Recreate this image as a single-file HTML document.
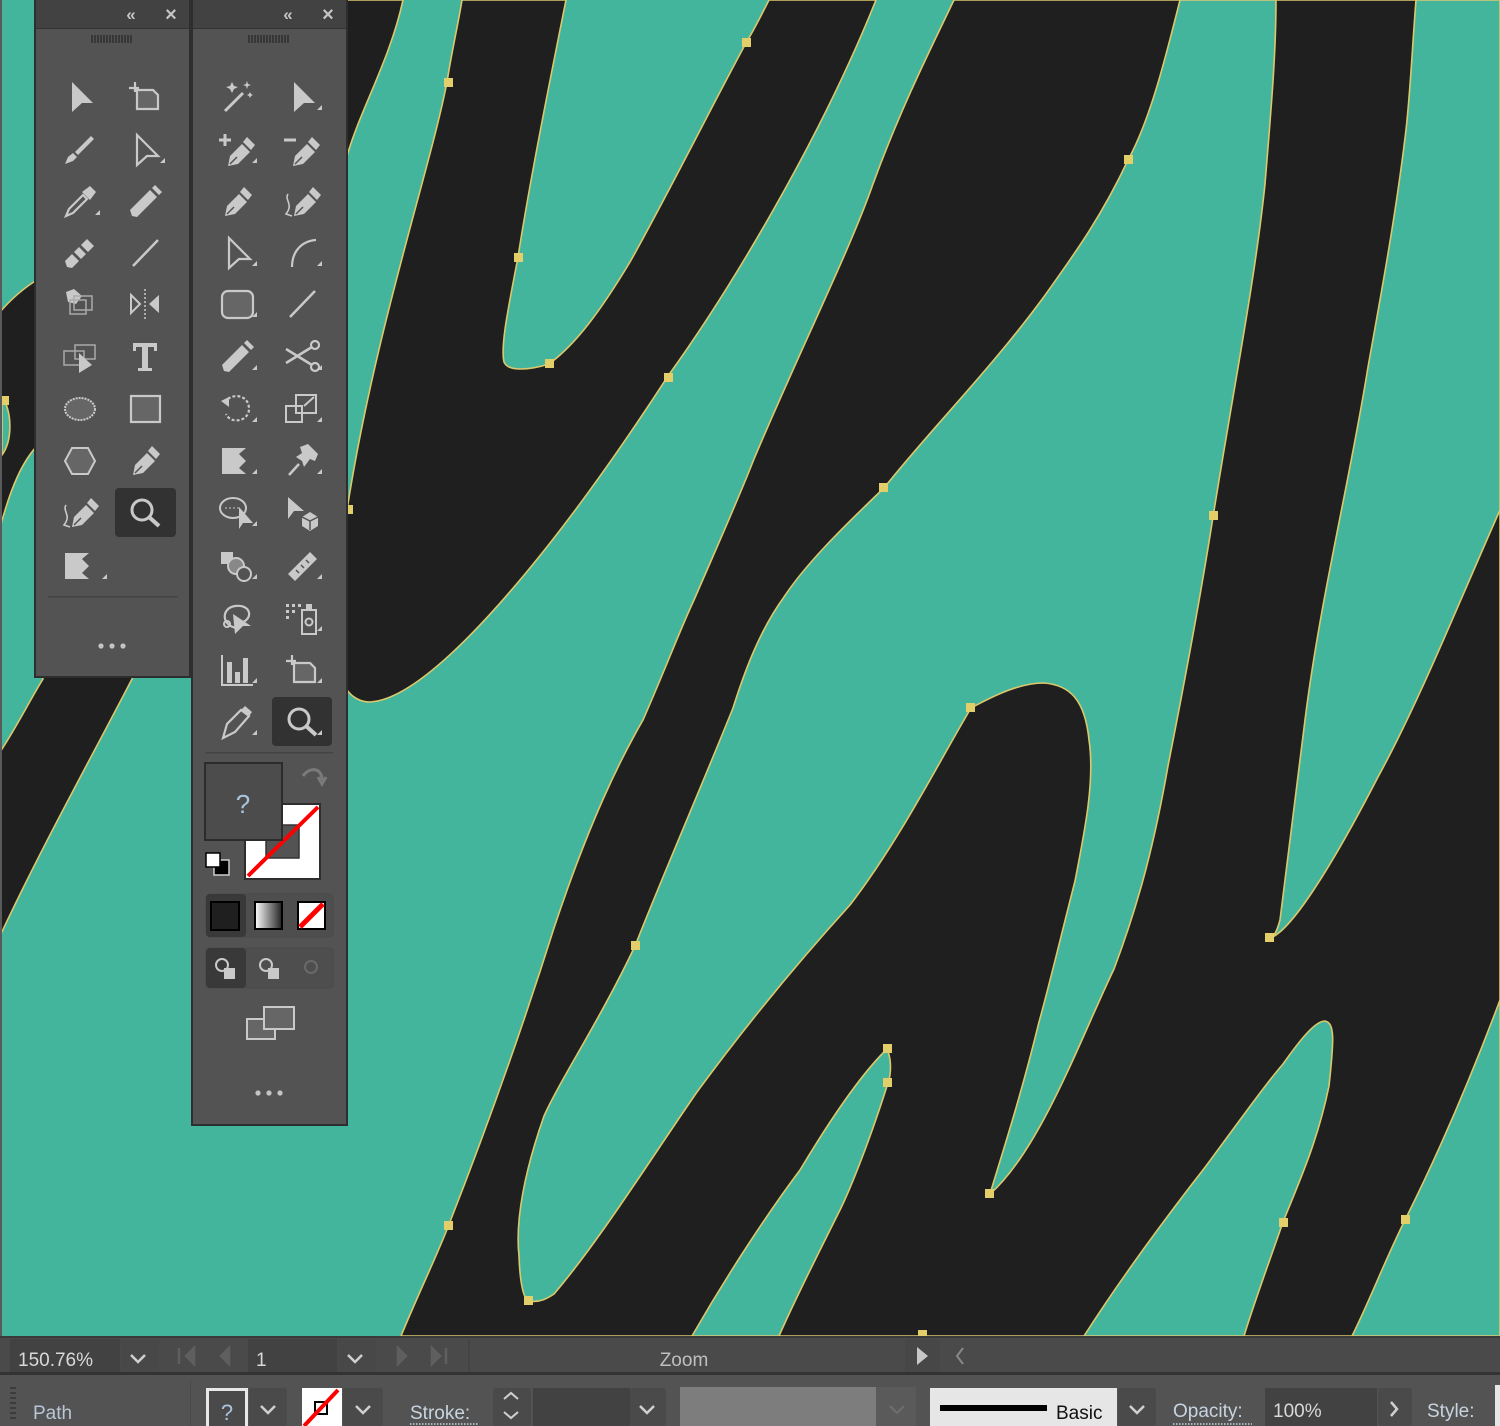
<!DOCTYPE html>
<html><head><meta charset="utf-8"><style>
html,body{margin:0;padding:0;background:#535353;}
svg{display:block;font-family:"Liberation Sans",sans-serif;}
</style></head><body>
<svg width="1500" height="1426" viewBox="0 0 1500 1426" xmlns="http://www.w3.org/2000/svg">
<defs>
<g id="tri"><path d="M35,33 L40,33 L40,28 Z" fill="#c9c9c9"/></g>
<g id="sel"><path d="M12,5 L33,26 L22,26 L12,35 Z" fill="#c9c9c9"/></g>
<g id="dsel"><path d="M12,5 L33,26 L22,26 L12,35 Z" fill="none" stroke="#c9c9c9" stroke-width="2.2" stroke-linejoin="miter"/></g>
<g id="artb"><path d="M4,11 H14 M10,5 V15" stroke="#c9c9c9" stroke-width="2.2"/><path d="M12,13 H28 L33,18 V32 H12 Z" fill="#666" stroke="#c9c9c9" stroke-width="2.2"/></g>
<g id="brush"><path d="M5,34 L8,27 L13,23 L17,27 L13,31 Z M15,22 L31,6 L34,9 L18,25 Z" fill="#c9c9c9"/></g>
<g id="eyed"><path d="M6,34 L9,27 L23,13 L27,17 L13,31 Z" fill="none" stroke="#c9c9c9" stroke-width="2.2"/><path d="M22,10 L30,4 L36,10 L30,18 Z" fill="#c9c9c9"/></g>
<g id="pencil"><path d="M7,34 L5,28 L25,8 L32,15 L12,35 Z M27,6 L30,3 L37,10 L34,13 Z" fill="#c9c9c9"/></g>
<g id="blob"><path d="M7,34 L5,28 L12,21 L19,28 L12,35 Z M14,19 L19,14 L26,21 L21,26 Z M21,12 L27,6 L34,13 L28,19 Z" fill="#c9c9c9"/></g>
<g id="line"><path d="M8,33 L33,7" stroke="#c9c9c9" stroke-width="2.5"/></g>
<g id="livep"><path d="M6,8 L14,5 L22,12 L16,20 L8,18 Z" fill="#c9c9c9"/><rect x="14" y="12" width="18" height="14" fill="none" stroke="#aaa" stroke-width="1.5"/><rect x="10" y="16" width="16" height="14" fill="none" stroke="#aaa" stroke-width="1.5"/></g>
<g id="reflect"><path d="M6,11 L15,20 L6,29 Z" fill="none" stroke="#c9c9c9" stroke-width="2"/><path d="M20,5 V35" stroke="#c9c9c9" stroke-width="1.5" stroke-dasharray="2,2"/><path d="M34,11 L24,20 L34,29 Z" fill="#c9c9c9"/></g>
<g id="persp"><rect x="4" y="14" width="20" height="14" fill="none" stroke="#aaa" stroke-width="1.5"/><rect x="15" y="8" width="20" height="14" fill="none" stroke="#aaa" stroke-width="1.5"/><path d="M19,16 L19,36 L32,28 Z" fill="#c9c9c9"/></g>
<g id="T"><path d="M8,6 H32 V14 H29 V10 H23 V31 H27 V34 H13 V31 H17 V10 H11 V14 H8 Z" fill="#c9c9c9"/></g>
<g id="ell"><ellipse cx="20" cy="20" rx="15" ry="11" fill="#666" stroke="#c9c9c9" stroke-width="2" stroke-dasharray="2,1"/></g>
<g id="rect"><rect x="6" y="7" width="29" height="26" fill="#666" stroke="#c9c9c9" stroke-width="2.2"/></g>
<g id="hex"><path d="M12,7 H28 L35,20 L28,33 H12 L5,20 Z" fill="#666" stroke="#c9c9c9" stroke-width="2"/></g>
<g id="pen"><path d="M8,34 L10,24 L22,12 L30,20 L18,32 Z M23,10 L27,5 L35,13 L31,18 Z" fill="#c9c9c9"/><path d="M10,32 L17,25" stroke="#535353" stroke-width="1.5"/></g>
<g id="cpen"><use href="#pen" transform="translate(4,0)"/><path d="M6,12 C2,18 12,22 4,32 L10,34" fill="none" stroke="#c9c9c9" stroke-width="1.6"/></g>
<g id="zoom"><circle cx="17" cy="17" r="10" fill="none" stroke="#c9c9c9" stroke-width="3"/><path d="M24,24 L34,33" stroke="#c9c9c9" stroke-width="4"/></g>
<g id="warp"><path d="M5,7 H29 L22,13 L29,20 L22,27 L29,33 H5 Z" fill="#c9c9c9"/></g>
<g id="wand"><path d="M8,34 L26,16" stroke="#c9c9c9" stroke-width="3"/><path d="M15,5 L17,9 L21,10 L17,12 L15,16 L13,12 L9,10 L13,9 Z M30,4 L31,7 L34,8 L31,9 L30,12 L29,9 L26,8 L29,7 Z M33,15 L34,17 L36,18 L34,19 L33,21 L32,19 L30,18 L32,17 Z" fill="#c9c9c9"/></g>
<g id="apen"><use href="#pen" transform="translate(3,2)"/><path d="M2,10 H14 M8,4 V16" stroke="#c9c9c9" stroke-width="3"/></g>
<g id="dpen"><use href="#pen" transform="translate(3,2)"/><path d="M2,10 H14" stroke="#c9c9c9" stroke-width="3"/></g>
<g id="arc"><path d="M10,34 C10,18 20,8 34,7" fill="none" stroke="#c9c9c9" stroke-width="2.2"/></g>
<g id="rrect"><rect x="5" y="7" width="31" height="27" rx="6" fill="#666" stroke="#c9c9c9" stroke-width="2.2"/></g>
<g id="scis"><circle cx="33" cy="8" r="4" fill="none" stroke="#c9c9c9" stroke-width="2.2"/><circle cx="33" cy="30" r="4" fill="none" stroke="#c9c9c9" stroke-width="2.2"/><path d="M4,12 L30,28 M4,26 L30,10" stroke="#c9c9c9" stroke-width="2.5"/></g>
<g id="rot"><path d="M8,14 C12,4 32,4 32,20 C32,32 14,36 9,25" fill="none" stroke="#c9c9c9" stroke-width="2.2" stroke-dasharray="3,2"/><path d="M4,12 L12,8 L12,18 Z" fill="#c9c9c9"/></g>
<g id="scale"><rect x="4" y="17" width="16" height="16" fill="none" stroke="#c9c9c9" stroke-width="2"/><rect x="14" y="6" width="20" height="18" fill="none" stroke="#c9c9c9" stroke-width="2"/><path d="M22,17 L32,8" stroke="#c9c9c9" stroke-width="2"/></g>
<g id="pin"><path d="M18,6 L26,3 L36,13 L33,20 L28,18 L22,26 L20,20 L14,16 L20,12 Z" fill="#c9c9c9"/><path d="M17,23 L7,34" stroke="#c9c9c9" stroke-width="2.5"/></g>
<g id="lsel"><ellipse cx="16" cy="15" rx="13" ry="10" fill="none" stroke="#c9c9c9" stroke-width="2"/><path d="M8,15 H22" stroke="#c9c9c9" stroke-dasharray="2,2"/><path d="M22,14 L36,30 L26,30 L22,36 Z" fill="#c9c9c9"/></g>
<g id="cube"><path d="M6,4 L22,18 L12,18 L6,26 Z" fill="#c9c9c9"/><path d="M20,24 L28,19 L36,24 L36,33 L28,38 L20,33 Z" fill="#c9c9c9"/><path d="M28,28 V37 M20,24 L28,28 L36,24" stroke="#535353" stroke-width="1.5" fill="none"/></g>
<g id="sbuild"><rect x="4" y="6" width="12" height="12" fill="#c9c9c9"/><circle cx="19" cy="20" r="8" fill="#888" stroke="#c9c9c9" stroke-width="2"/><circle cx="27" cy="28" r="7" fill="#535353" stroke="#c9c9c9" stroke-width="2"/></g>
<g id="ruler"><path d="M6,28 L28,6 L35,13 L13,35 Z" fill="#c9c9c9"/><path d="M14,24 L17,27 M19,19 L22,22 M24,14 L27,17" stroke="#535353" stroke-width="1.5"/></g>
<g id="lasso"><path d="M20,30 C4,28 4,10 18,8 C34,6 36,20 26,24" fill="none" stroke="#c9c9c9" stroke-width="2.2"/><circle cx="10" cy="26" r="3" fill="none" stroke="#c9c9c9" stroke-width="2"/><path d="M16,16 L34,28 L26,28 L18,36 Z" fill="#c9c9c9"/></g>
<g id="spray"><path d="M4,6 h3v3h-3z M10,6 h3v3h-3z M16,6 h3v3h-3z M4,12 h3v3h-3z M10,12 h3v3h-3z M4,18 h3v3h-3z" fill="#c9c9c9"/><rect x="20" y="12" width="14" height="24" fill="none" stroke="#c9c9c9" stroke-width="2"/><rect x="24" y="6" width="6" height="6" fill="#c9c9c9"/><circle cx="27" cy="24" r="3.5" fill="none" stroke="#c9c9c9" stroke-width="2"/></g>
<g id="graph"><path d="M5,5 V35 H36" fill="none" stroke="#c9c9c9" stroke-width="2"/><rect x="10" y="12" width="5" height="21" fill="#c9c9c9"/><rect x="18" y="22" width="5" height="11" fill="#c9c9c9"/><rect x="26" y="8" width="5" height="25" fill="#c9c9c9"/></g>
<g id="knife"><path d="M6,36 L10,22 L24,8 L32,14 L18,30 Z" fill="none" stroke="#c9c9c9" stroke-width="2.2"/><path d="M24,8 L28,4 L35,10 L32,14 Z" fill="#c9c9c9"/></g>
</defs>

<!-- canvas -->
<rect x="0" y="0" width="1500" height="1336" fill="#43b59d"/>
<g stroke="#dcc86c" stroke-width="1.6" stroke-linejoin="round">
<path fill="#1f1f1f" d="M954,0 L1500,0 L1500,1336 L401,1336 C420,1290 435,1260 448,1227 C490,1120 525,1020 554,928 C590,820 620,760 643,720 C665,670 680,630 694,600 C720,540 738,500 754,459 C800,350 850,250 873,184 C900,110 930,50 954,0 Z"/>
<path fill="#43b59d" d="M1180,0 C1165,60 1150,120 1128,160 C1100,220 1070,260 1043,298 C990,370 930,430 884,488 C840,530 805,565 784,597 C760,630 745,670 733,708 C700,790 665,870 635,946 C600,1020 560,1080 544,1116 C525,1170 515,1220 519,1256 C520,1285 524,1300 529,1301 C540,1303 548,1298 554,1294 C600,1240 650,1160 697,1092 C750,1020 800,960 850,905 C900,840 940,760 971,708 C995,695 1020,683 1044,683 C1070,685 1085,700 1089,740 C1095,780 1085,830 1075,881 C1060,940 1048,990 1039,1022 C1020,1100 1000,1160 990,1194 C1040,1150 1080,1040 1114,969 C1140,900 1155,840 1168,766 C1185,680 1200,600 1213,517 C1235,380 1255,280 1265,184 C1272,100 1276,50 1276,0 Z"/>
<path fill="#43b59d" d="M1416,0 C1412,50 1410,100 1405,138 C1395,220 1380,300 1368,367 C1350,480 1320,600 1305,720 C1295,800 1285,880 1280,920 C1276,935 1272,938 1270,938 C1290,932 1330,870 1378,777 C1420,700 1460,600 1500,510 L1500,0 Z"/>
<path fill="#43b59d" d="M1084,1336 C1120,1280 1160,1225 1206,1166 C1240,1120 1265,1085 1283,1064 C1300,1040 1315,1021 1325,1021 C1335,1023 1334,1040 1329,1086 C1318,1140 1300,1180 1283,1222 C1270,1260 1255,1300 1244,1336 Z"/>
<path fill="#43b59d" d="M1352,1336 C1370,1300 1385,1260 1405,1220 C1440,1150 1470,1080 1500,1000 L1500,1336 Z"/>
<path fill="#43b59d" d="M692,1336 C730,1270 770,1210 800,1170 C830,1120 860,1075 887,1049 C892,1060 891,1075 888,1083 C870,1140 850,1190 840,1210 C815,1260 795,1300 779,1336 Z"/>
<path fill="#1f1f1f" d="M462,0 L566,0 C550,80 530,180 518,257 C510,300 500,345 504,362 C508,372 530,370 549,364 C575,345 600,312 630,262 C665,200 715,100 746,43 C755,28 762,14 769,0 L876,0 C820,140 730,290 668,376 C620,450 570,520 525,574 C470,640 410,700 370,702 C360,702 352,697 347,690 L320,690 L320,515 L347,510 C375,330 430,170 447,82 C452,50 458,25 462,0 Z"/>
<path fill="#1f1f1f" d="M320,0 L403,0 C390,60 360,110 347,156 L320,170 Z"/>
<path fill="#1f1f1f" d="M0,312 C12,298 25,287 40,278 L40,443 C22,460 10,490 0,528 Z"/>
<path fill="#43b59d" d="M2,397 C12,410 13,440 2,455 Z"/>
<path fill="#1f1f1f" d="M0,752 C15,730 30,700 43,679 L43,650 L145,650 L132,679 C90,760 40,850 0,936 Z"/>
</g>
<g fill="#e2cf6a">
<rect x="444" y="78" width="9" height="9"/><rect x="742" y="38" width="9" height="9"/><rect x="514" y="253" width="9" height="9"/>
<rect x="545" y="359" width="9" height="9"/><rect x="664" y="373" width="9" height="9"/><rect x="879" y="483" width="9" height="9"/>
<rect x="1124" y="155" width="9" height="9"/><rect x="1209" y="511" width="9" height="9"/><rect x="1265" y="933" width="9" height="9"/>
<rect x="966" y="703" width="9" height="9"/><rect x="631" y="941" width="9" height="9"/><rect x="883" y="1044" width="9" height="9"/>
<rect x="883" y="1078" width="9" height="9"/><rect x="985" y="1189" width="9" height="9"/><rect x="444" y="1221" width="9" height="9"/>
<rect x="524" y="1296" width="9" height="9"/><rect x="1279" y="1218" width="9" height="9"/><rect x="1401" y="1215" width="9" height="9"/>
<rect x="918" y="1330" width="9" height="6"/><rect x="1" y="396" width="8" height="9"/><rect x="347" y="505" width="6" height="9"/>
</g>
<rect x="0" y="0" width="2" height="1336" fill="#5a5a5a"/>

<!-- panel 1 -->
<rect x="34" y="0" width="157" height="678" fill="#2e2e2e"/>
<rect x="36" y="0" width="153" height="676" fill="#535353"/>
<rect x="36" y="0" width="153" height="28" fill="#424242"/>
<rect x="36" y="28" width="153" height="1" fill="#333"/>
<text x="131" y="20" fill="#c4c4c4" font-size="17" font-weight="bold" text-anchor="middle">«</text>
<text x="171" y="21" fill="#c4c4c4" font-size="20" font-weight="bold" text-anchor="middle">×</text>
<path d="M92,35 V43 M95,35 V43 M98,35 V43 M101,35 V43 M104,35 V43 M107,35 V43 M110,35 V43 M113,35 V43 M116,35 V43 M119,35 V43 M122,35 V43 M125,35 V43 M128,35 V43 M131,35 V43" stroke="#2e2e2e" stroke-width="1.5"/>
<rect x="115" y="488" width="61" height="49" rx="4" fill="#323232"/>
<use href="#sel" x="60" y="77"/><use href="#artb" x="125" y="77"/>
<use href="#brush" x="60" y="130"/><use href="#dsel" x="125" y="130"/><use href="#tri" x="125" y="130"/>
<use href="#eyed" x="60" y="182"/><use href="#tri" x="60" y="182"/><use href="#pencil" x="125" y="182"/>
<use href="#blob" x="60" y="233"/><use href="#line" x="125" y="233"/>
<use href="#livep" x="60" y="284"/><use href="#reflect" x="125" y="284"/>
<use href="#persp" x="60" y="337"/><use href="#T" x="125" y="337"/>
<use href="#ell" x="60" y="389"/><use href="#rect" x="125" y="389"/>
<use href="#hex" x="60" y="441"/><use href="#pen" x="125" y="441"/>
<use href="#cpen" x="60" y="493"/><use href="#zoom" x="125" y="493"/>
<use href="#warp" x="60" y="546"/><use href="#tri" x="67" y="546"/>
<rect x="48" y="596" width="130" height="1.5" fill="#444"/>
<circle cx="101" cy="646" r="2.6" fill="#c4c4c4"/><circle cx="112" cy="646" r="2.6" fill="#c4c4c4"/><circle cx="123" cy="646" r="2.6" fill="#c4c4c4"/>

<!-- panel 2 -->
<rect x="191" y="0" width="157" height="1126" fill="#2e2e2e"/>
<rect x="193" y="0" width="153" height="1124" fill="#535353"/>
<rect x="193" y="0" width="153" height="28" fill="#424242"/>
<rect x="193" y="28" width="153" height="1" fill="#333"/>
<text x="288" y="20" fill="#c4c4c4" font-size="17" font-weight="bold" text-anchor="middle">«</text>
<text x="328" y="21" fill="#c4c4c4" font-size="20" font-weight="bold" text-anchor="middle">×</text>
<path d="M249,35 V43 M252,35 V43 M255,35 V43 M258,35 V43 M261,35 V43 M264,35 V43 M267,35 V43 M270,35 V43 M273,35 V43 M276,35 V43 M279,35 V43 M282,35 V43 M285,35 V43 M288,35 V43" stroke="#2e2e2e" stroke-width="1.5"/>
<rect x="272" y="697" width="60" height="49" rx="4" fill="#323232"/>
<use href="#wand" x="217" y="77"/><use href="#sel" x="282" y="77"/><use href="#tri" x="282" y="77"/>
<use href="#apen" x="217" y="130"/><use href="#tri" x="217" y="130"/><use href="#dpen" x="282" y="130"/>
<use href="#pen" x="217" y="182"/><use href="#cpen" x="282" y="182"/>
<use href="#dsel" x="217" y="233"/><use href="#tri" x="217" y="233"/><use href="#arc" x="282" y="233"/><use href="#tri" x="282" y="233"/>
<use href="#rrect" x="217" y="284"/><use href="#tri" x="217" y="284"/><use href="#line" x="282" y="284"/>
<use href="#pencil" x="217" y="337"/><use href="#tri" x="217" y="337"/><use href="#scis" x="282" y="337"/><use href="#tri" x="282" y="337"/>
<use href="#rot" x="217" y="389"/><use href="#tri" x="217" y="389"/><use href="#scale" x="282" y="389"/><use href="#tri" x="282" y="389"/>
<use href="#warp" x="217" y="441"/><use href="#tri" x="217" y="441"/><use href="#pin" x="282" y="441"/><use href="#tri" x="282" y="441"/>
<use href="#lsel" x="217" y="493"/><use href="#tri" x="217" y="493"/><use href="#cube" x="282" y="493"/>
<use href="#sbuild" x="217" y="546"/><use href="#tri" x="217" y="546"/><use href="#ruler" x="282" y="546"/><use href="#tri" x="282" y="546"/>
<use href="#lasso" x="217" y="598"/><use href="#spray" x="282" y="598"/><use href="#tri" x="282" y="598"/>
<use href="#graph" x="217" y="650"/><use href="#tri" x="217" y="650"/><use href="#artb" x="282" y="650"/><use href="#tri" x="282" y="650"/>
<use href="#knife" x="217" y="702"/><use href="#tri" x="217" y="702"/><use href="#zoom" x="282" y="702"/><use href="#tri" x="282" y="702"/>
<rect x="205" y="752" width="128" height="1.5" fill="#444"/>
<!-- fill/stroke -->
<path d="M303,776 C310,766 322,768 322,780 M318,777 L322,784 L326,777" fill="none" stroke="#7a7a7a" stroke-width="3"/>
<rect x="244" y="803" width="77" height="77" fill="#2e2e2e"/>
<rect x="246" y="805" width="73" height="73" fill="#fff"/>
<rect x="266" y="825" width="33" height="33" fill="#535353" stroke="#333" stroke-width="1.5"/>
<path d="M248,876 L318,807" stroke="#ff0000" stroke-width="4"/>
<rect x="205" y="763" width="77" height="77" fill="#4c4c4c" stroke="#2c2c2c" stroke-width="2"/>
<text x="243" y="813" fill="#a9c4dd" font-size="26" text-anchor="middle">?</text>
<rect x="214" y="860" width="15" height="15" fill="#000" stroke="#ccc" stroke-width="1.5"/>
<rect x="206" y="853" width="14" height="14" fill="#fff" stroke="#000" stroke-width="1.5"/>
<rect x="206" y="894" width="127" height="43" rx="4" fill="#4e4e4e" stroke="#4a4a4a"/>
<rect x="206" y="894" width="40" height="43" rx="4" fill="#393939"/>
<rect x="211" y="902" width="28" height="28" fill="#1f1f1f" stroke="#000" stroke-width="2"/>
<defs><linearGradient id="g" x1="0" x2="1"><stop offset="0" stop-color="#fff"/><stop offset="1" stop-color="#222"/></linearGradient></defs>
<rect x="255" y="902" width="27" height="27" fill="url(#g)" stroke="#000" stroke-width="2"/>
<rect x="298" y="902" width="27" height="27" fill="#fff" stroke="#000" stroke-width="2"/>
<path d="M300,927 L323,904" stroke="#f00" stroke-width="5"/>
<rect x="206" y="948" width="127" height="40" rx="4" fill="#4e4e4e" stroke="#4a4a4a"/>
<rect x="206" y="948" width="40" height="40" rx="4" fill="#393939"/>
<circle cx="222" cy="965" r="6" fill="none" stroke="#c9c9c9" stroke-width="2"/><rect x="224" y="968" width="11" height="11" fill="#c9c9c9"/>
<circle cx="266" cy="965" r="6" fill="none" stroke="#c9c9c9" stroke-width="2"/><rect x="268" y="968" width="11" height="11" fill="#c9c9c9"/>
<circle cx="311" cy="967" r="6" fill="none" stroke="#6a6a6a" stroke-width="2"/>
<rect x="247" y="1019" width="28" height="20" fill="#666" stroke="#c9c9c9" stroke-width="2"/>
<rect x="264" y="1007" width="30" height="22" fill="#666" stroke="#c9c9c9" stroke-width="2"/>
<circle cx="258" cy="1093" r="2.6" fill="#c4c4c4"/><circle cx="269" cy="1093" r="2.6" fill="#c4c4c4"/><circle cx="280" cy="1093" r="2.6" fill="#c4c4c4"/>

<!-- status bar -->
<rect x="0" y="1336" width="1500" height="37" fill="#4a4a4a"/>
<rect x="0" y="1336" width="1500" height="2" fill="#3a3a3a"/>
<rect x="10" y="1339" width="110" height="33" fill="#424242"/>
<text x="18" y="1366" fill="#d9d9d9" font-size="19">150.76%</text>
<rect x="121" y="1339" width="38" height="33" fill="#484848"/>
<path d="M131,1355 L138,1362 L145,1355" fill="none" stroke="#d0d0d0" stroke-width="2.5"/>
<path d="M179,1348 V1364 M194,1348 L186,1356 L194,1364 Z M229,1348 L221,1356 L229,1364 Z" stroke="#5f5f5f" fill="#5f5f5f" stroke-width="2.5"/>
<rect x="248" y="1339" width="89" height="33" fill="#424242"/>
<text x="256" y="1366" fill="#d9d9d9" font-size="19">1</text>
<rect x="338" y="1339" width="38" height="33" fill="#484848"/>
<path d="M348,1355 L355,1362 L362,1355" fill="none" stroke="#d0d0d0" stroke-width="2.5"/>
<path d="M398,1348 L406,1356 L398,1364 Z M432,1348 L440,1356 L432,1364 Z M446,1348 V1364" stroke="#5f5f5f" fill="#5f5f5f" stroke-width="2.5"/>
<rect x="468" y="1339" width="2" height="33" fill="#444"/>
<text x="684" y="1366" fill="#bfbfbf" font-size="19" text-anchor="middle">Zoom</text>
<rect x="905" y="1339" width="35" height="33" fill="#474747"/>
<path d="M917,1347 L928,1356 L917,1365 Z" fill="#c8c8c8"/>
<path d="M963,1348 L957,1356 L963,1364" fill="none" stroke="#888" stroke-width="2"/>
<rect x="0" y="1372" width="1500" height="3" fill="#333"/>

<!-- control bar -->
<rect x="0" y="1375" width="1500" height="51" fill="#535353"/>
<path d="M10,1388 H16 M10,1393 H16 M10,1398 H16 M10,1403 H16 M10,1408 H16 M10,1413 H16 M10,1418 H16" stroke="#3c3c3c" stroke-width="2"/>
<text x="33" y="1419" fill="#b8c6d6" font-size="19">Path</text>
<rect x="190" y="1380" width="1" height="46" fill="#4a4a4a"/>
<rect x="206" y="1388" width="42" height="38" fill="#e8e8e8"/>
<rect x="209" y="1391" width="36" height="35" fill="#4a4a4a"/>
<text x="227" y="1420" fill="#a9c4dd" font-size="22" text-anchor="middle">?</text>
<rect x="249" y="1388" width="38" height="38" rx="3" fill="#4a4a4a"/>
<path d="M261,1406 L268,1413 L275,1406" fill="none" stroke="#d0d0d0" stroke-width="2.5"/>
<rect x="302" y="1388" width="40" height="38" fill="#fff"/>
<rect x="315" y="1402" width="12" height="12" fill="none" stroke="#000" stroke-width="2"/>
<path d="M304,1426 L338,1390" stroke="#f00" stroke-width="4"/>
<rect x="343" y="1388" width="40" height="38" rx="3" fill="#4a4a4a"/>
<path d="M356,1406 L363,1413 L370,1406" fill="none" stroke="#d0d0d0" stroke-width="2.5"/>
<text x="410" y="1419" fill="#c8d4e0" font-size="19">Stroke:</text>
<path d="M410,1424 H478" stroke="#c8d4e0" stroke-width="1.5" stroke-dasharray="1.5,1.5"/>
<rect x="493" y="1388" width="38" height="38" rx="3" fill="#4a4a4a"/>
<path d="M504,1399 L511,1393 L518,1399 M504,1412 L511,1418 L518,1412" fill="none" stroke="#d0d0d0" stroke-width="2"/>
<rect x="533" y="1388" width="97" height="38" fill="#424242"/>
<rect x="630" y="1388" width="36" height="38" rx="3" fill="#4a4a4a"/>
<path d="M640,1406 L647,1413 L654,1406" fill="none" stroke="#d0d0d0" stroke-width="2.5"/>
<rect x="680" y="1387" width="196" height="39" fill="#7d7d7d"/>
<rect x="876" y="1387" width="40" height="39" fill="#5a5a5a"/>
<path d="M890,1406 L897,1413 L904,1406" fill="none" stroke="#6e6e6e" stroke-width="2"/>
<rect x="930" y="1388" width="187" height="38" fill="#e6e6e6"/>
<rect x="940" y="1405" width="107" height="6" fill="#000"/>
<text x="1056" y="1419" fill="#111" font-size="19">Basic</text>
<rect x="1118" y="1388" width="38" height="38" rx="3" fill="#4a4a4a"/>
<path d="M1130,1406 L1137,1413 L1144,1406" fill="none" stroke="#d0d0d0" stroke-width="2.5"/>
<text x="1173" y="1417" fill="#c8d4e0" font-size="19">Opacity:</text>
<path d="M1173,1424 H1252" stroke="#c8d4e0" stroke-width="1.5" stroke-dasharray="1.5,1.5"/>
<rect x="1265" y="1388" width="112" height="38" fill="#424242"/>
<text x="1273" y="1417" fill="#d9d9d9" font-size="19">100%</text>
<rect x="1378" y="1388" width="34" height="38" rx="3" fill="#4a4a4a"/>
<path d="M1391,1402 L1397,1409 L1391,1416" fill="none" stroke="#d0d0d0" stroke-width="2.5"/>
<text x="1427" y="1417" fill="#c8d4e0" font-size="19">Style:</text>
<rect x="1495" y="1385" width="5" height="41" fill="#e6e6e6"/>
</svg>
</body></html>
